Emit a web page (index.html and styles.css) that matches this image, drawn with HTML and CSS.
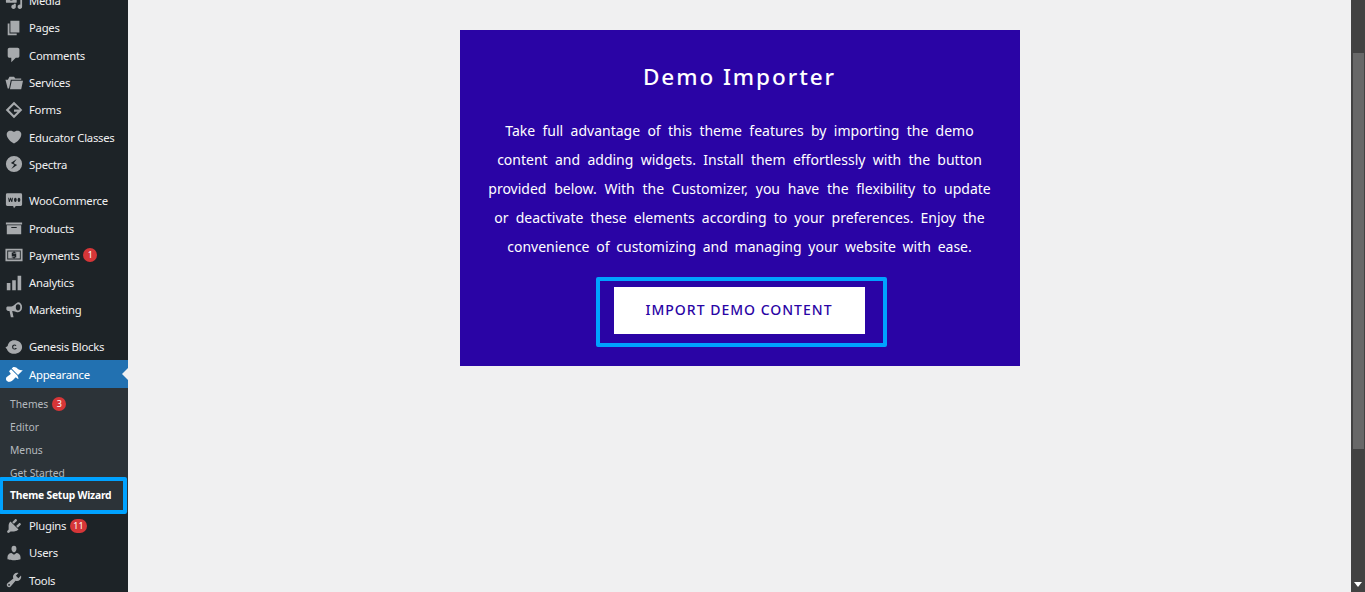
FILE: index.html
```html
<!DOCTYPE html>
<html lang="en">
<head>
    <meta charset="UTF-8">
    <meta name="viewport" content="width=device-width, initial-scale=1.0">
    <title>Demo Importer</title>
    <link rel="stylesheet" href="styles.css">
</head>
<body>
    <div class="page">
        <!-- Admin menu -->
        <nav class="sidebar">
            <ul class="menu">
                <li class="item"><svg class="icon" viewBox="0 0 20 20"><path d="M13 11V4c0-.55-.45-1-1-1h-1.67L9 1H5L3.67 3H2c-.55 0-1 .45-1 1v7c0 .55.45 1 1 1h10c.55 0 1-.45 1-1zM7 4.500c1.380 0 2.500 1.120 2.500 2.500S8.380 9.500 7 9.500 4.500 8.380 4.500 7 5.620 4.500 7 4.500zM14 6h5v10.500c0 1.380-1.120 2.500-2.500 2.500S14 17.880 14 16.500s1.120-2.500 2.500-2.500c.17 0 .34.02.5.05V9h-3V6zm-4 8.050V13h2v3.500c0 1.380-1.120 2.500-2.500 2.500S7 17.880 7 16.500 8.120 14 9.500 14c.17 0 .34.02.5.05z"/></svg>Media</li>
                <li class="item"><svg class="icon" viewBox="0 0 20 20"><path d="M6 15V2h10v13H6zm-1 1h8v2H3V5h2v11z"/></svg>Pages</li>
                <li class="item"><svg class="icon" viewBox="0 0 20 20"><path d="M5 2h9q.82 0 1.410.59T16 4v7q0 .82-.59 1.410T14 13h-2l-5 5v-5H5q-.82 0-1.410-.59T3 11V4q0-.82.59-1.410T5 2z"/></svg>Comments</li>
                <li class="item"><svg class="icon" viewBox="0 0 20 20"><path d="M5 3h5l1.500 2H18v1.500H6.500L4.500 16H3L.5 6.500h2.700zM7.500 7.500H20l-2 9.500H5.500z"/></svg>Services</li>
                <li class="item"><svg class="icon" viewBox="0 0 20 20"><path d="M10 .8L19.200 10 10 19.200 .8 10zM10 4.200L4.200 10l5.800 5.800 3.900-3.900H10V9.500h6.500z" fill-rule="evenodd"/></svg>Forms</li>
                <li class="item"><svg class="icon" viewBox="0 0 20 20"><path d="M10 17.120c3.330-1.400 5.740-3.790 7.040-6.210 1.280-2.410 1.460-4.810.32-6.250-1.030-1.290-2.370-1.780-3.730-1.740s-2.680.63-3.630 1.460c-.95-.83-2.270-1.420-3.630-1.460s-2.700.45-3.730 1.740c-1.140 1.440-.96 3.840.34 6.250 1.280 2.420 3.690 4.810 7.020 6.210z"/></svg>Educator Classes</li>
                <li class="item"><svg class="icon" viewBox="0 0 20 20"><path fill-rule="evenodd" d="M10 1a9 9 0 1 1 0 18 9 9 0 0 1 0-18zM13 4.500L6.500 9l3.800 1.800L7 15.500 13.500 11 9.700 9.200z"/></svg>Spectra</li>
            </ul>
            <ul class="menu">
                <li class="item"><svg class="icon" viewBox="0 0 20 20"><path fill-rule="evenodd" d="M2.500 1.500h15a1.500 1.500 0 0 1 1.500 1.500v11a1.500 1.500 0 0 1-1.500 1.500h-5.500L10 18l-1-2.500H2.500A1.500 1.500 0 0 1 1 14V3a1.500 1.500 0 0 1 1.500-1.500zM3.500 6.500l.8 4.500h1l.9-2.500.9 2.500h1l.8-4.500H8l-.4 2.500-.9-2.500h-1l-.9 2.500-.4-2.500zM11.500 6.500a1.500 2.250 0 1 0 .01 0zM15.500 6.500a1.500 2.250 0 1 0 .01 0z"/></svg>WooCommerce</li>
                <li class="item"><svg class="icon" viewBox="0 0 20 20"><path d="M19 4v2H1V4h18zM2 7h16v10H2V7zm11 3V9H7v1h6z"/></svg>Products</li>
                <li class="item"><svg class="icon" viewBox="0 0 20 20"><path fill-rule="evenodd" d="M.5 3h19v14H.5zM2.500 5v10h15V5zM3.500 6h13v8h-13zM12.500 7.200H11V6.500H9.200v.7H7.500V11h3.200v.7H7.500v1.200h1.700v.6H11v-.6h1.500V9H9.300v-.7h3.200z"/></svg>Payments<span class="badge">1</span></li>
                <li class="item"><svg class="icon" viewBox="0 0 20 20"><path d="M18 18V2h-4v16h4zm-6 0V7H8v11h4zm-6 0v-8H2v8h4z"/></svg>Analytics</li>
                <li class="item"><svg class="icon" viewBox="0 0 20 20"><path fill-rule="evenodd" d="M14.500 1.500a4.500 5.500 0 1 1 0 11c-1 0-4-1.500-6.500-1.500L9.500 18h-3L5 11H3.500C2.500 11 1.500 10 1.500 9V7.500c0-1 1-1.500 2-1.500H7c3 0 6-4.500 7.500-4.500zM14.500 3.500a2.500 3.500 0 1 0 0 7 2.500 3.500 0 1 0 0-7z"/></svg>Marketing</li>
            </ul>
            <ul class="menu menu-shifted">
                <li class="item"><svg class="icon" viewBox="0 0 20 20"><path fill-rule="evenodd" d="M10 2.500c4.800 0 9 3 9 7.500s-4.200 7.500-9 7.500c-4 0-7-2.300-7.800-5L.5 10.500 3 9C3.500 5 6.500 2.500 10 2.500zM10.500 7.200A2.800 2.800 0 1 0 13.200 11H10.500v1h1.300a1.500 1.500 0 1 1-1.300-3.800c.5 0 1 .2 1.300.6l.9-.6c-.5-.6-1.300-1-2.200-1z"/></svg>Genesis Blocks</li>
                <li class="item current"><svg class="icon" viewBox="0 0 20 20"><path d="M14.480 11.060L7.410 3.990l1.500-1.500c.5-.56 2.300-.47 3.510.32 1.210.8 1.430 1.280 2.910 2.100 1.180.64 2.450 1.260 4.450.85zm-.71.71L6.700 4.700 4.930 6.470c-.39.39-.39 1.020 0 1.410l1.060 1.060c.39.39.39 1.030 0 1.420-.6.6-1.430 1.110-2.210 1.690-.35.26-.7.53-1.010.84C1.430 13.230.18 15.830 2.100 17.900c.91.91 2.260.96 3.220.75 1.470-.31 3.140-1.600 4.160-2.570.58-.55 1.140-1.350 1.700-2.030.39-.39 1.020-.39 1.410 0l1.070 1.060c.39.39 1.020.39 1.410 0z"/></svg>Appearance</li>
                <li class="submenu">
                    <a class="sub-link">Themes<span class="badge">3</span></a>
                    <a class="sub-link">Editor</a>
                    <a class="sub-link">Menus</a>
                    <a class="sub-link">Get Started</a>
                    <a class="sub-link wizard">Theme Setup Wizard</a>
                </li>
                <li class="item"><svg class="icon" viewBox="0 0 20 20"><path d="M13.110 4.360L9.870 7.600 8 5.730l3.240-3.240c.35-.34 1.050-.2 1.560.32.52.51.66 1.210.31 1.550zm-8 1.770l.91-1.120 9.010 9.010-1.190.84c-.71.71-2.630 1.160-3.820 1.160H6.140L4.900 17.260c-.59.59-1.540.59-2.120 0-.59-.58-.59-1.530 0-2.120l1.240-1.240v-3.880c0-1.130.4-3.190 1.090-3.890zm7.260 3.970l3.240-3.240c.34-.35 1.040-.2 1.550.31.52.51.66 1.210.31 1.550l-3.240 3.250z"/></svg>Plugins<span class="badge">11</span></li>
                <li class="item"><svg class="icon" viewBox="0 0 20 20"><path d="M10 9.250c-2.270 0-2.730-3.440-2.730-3.440C7 4.020 7.820 2 9.970 2c2.160 0 2.980 2.020 2.710 3.810 0 0-.41 3.440-2.680 3.440zm0 2.570L12.720 10c2.390 0 4.520 2.330 4.520 4.530v2.490s-3.650 1.130-7.240 1.130c-3.650 0-7.240-1.130-7.240-1.130v-2.490c0-2.250 1.940-4.480 4.470-4.480z"/></svg>Users</li>
                <li class="item"><svg class="icon" viewBox="0 0 20 20"><path d="M16.680 9.770c-1.340 1.340-3.300 1.670-4.950.99l-5.410 6.520c-.99.99-2.590.99-3.580 0s-.99-2.590 0-3.570l6.520-5.420c-.68-1.650-.35-3.610.99-4.950 1.280-1.280 3.120-1.620 4.720-1.060l-2.890 2.890 2.820 2.820 2.860-2.870c.53 1.580.18 3.390-1.080 4.650zM3.810 16.210c.4.39 1.040.39 1.430 0 .4-.4.4-1.040 0-1.430-.39-.4-1.030-.4-1.430 0-.39.39-.39 1.030 0 1.430z"/></svg>Tools</li>
            </ul>
        </nav>

        <main class="content">
            <section class="importer">
                <h2>Demo Importer</h2>
                <p>
                    <span class="line spread-1">Take full advantage of this theme features by importing the demo</span>
                    <span class="line spread-2">content and adding widgets. Install them effortlessly with the button</span>
                    <span class="line spread-3">provided below. With the Customizer, you have the flexibility to update</span>
                    <span class="line spread-4">or deactivate these elements according to your preferences. Enjoy the</span>
                    <span class="line spread-5">convenience of customizing and managing your website with ease.</span>
                </p>
                <div class="import-outline">
                    <a class="import-button">IMPORT DEMO CONTENT</a>
                </div>
            </section>
        </main>

        <!-- Browser scrollbar -->
        <div class="scrollbar">
            <div class="scroll-thumb"></div>
            <div class="scroll-arrow"></div>
        </div>
    </div>
</body>
</html>
```

FILE: styles.css
```css
body {
    margin: 0;
    font-family: "Noto Sans", sans-serif;
    background-color: #f0f0f1;
    overflow: hidden;
}
.page {
    display: flex;
    height: 592px;
}
.sidebar {
    width: 128px;
    flex-shrink: 0;
    background-color: #1d2327;
    overflow: hidden;
}
.menu {
    list-style: none;
    margin: 0 0 9px 0;
    padding: 0;
}
.sidebar .menu:first-child {
    margin-top: -13px;
}
.menu-shifted {
    margin-top: 9.6px;
}
.item {
    display: flex;
    align-items: center;
    height: 27.3px;
    padding-left: 5px;
    font-size: 11.3px;
    letter-spacing: -0.25px;
    color: #f0f0f1;
    white-space: nowrap;
}
.icon {
    width: 18px;
    height: 18px;
    margin-right: 6px;
    fill: #a7aaad;
    flex-shrink: 0;
}
.current {
    position: relative;
    background-color: #2271b1;
    color: #fff;
}
.current .icon {
    fill: #fff;
}
/* little arrow pointing at the content */
.current::after {
    content: "";
    position: absolute;
    right: 0;
    top: 8px;
    border: 6px solid transparent;
    border-left-width: 0;
    border-right-color: #f0f0f1;
}
.badge {
    display: inline-block;
    min-width: 14px;
    height: 14px;
    line-height: 14px;
    margin-left: 4px;
    padding: 0 3px;
    box-sizing: border-box;
    border-radius: 9px;
    background-color: #d63638;
    color: #fff;
    font-size: 9px;
    letter-spacing: 0;
    text-align: center;
}
.submenu {
    display: block;
    height: 119.2px;
    padding-top: 5px;
    background-color: #2c3338;
}
.sub-link {
    display: flex;
    align-items: center;
    height: 22.8px;
    padding-left: 10px;
    font-size: 10.3px;
    color: #b4b9be;
    white-space: nowrap;
}
.wizard {
    position: relative;
    height: 29px;
    margin: -7.4px 1px 0 -1px;
    padding-left: 7px;
    border: 4px solid #00a2ff;
    border-radius: 2px;
    background-color: #2c3338;
    color: #fff;
    font-weight: 700;
    letter-spacing: -0.2px;
}
.content {
    flex: 1;
    padding-top: 30px;
}
.importer {
    width: 560px;
    height: 336px;
    margin: 0 auto;
    padding-top: 32px;
    box-sizing: border-box;
    background-color: #2a04a5;
    color: #fff;
    text-align: center;
}
.importer h2 {
    margin: 0;
    font-size: 22.5px;
    line-height: 30px;
    font-weight: 500;
    letter-spacing: 1.95px;
}
.importer p {
    margin: 24px 0 0 0;
    font-size: 14px;
    line-height: 29px;
    white-space: nowrap;
}
.line {
    display: block;
}
.spread-1 { word-spacing: 3.7px; }
.spread-2 { word-spacing: 3.7px; }
.spread-3 { word-spacing: 4.1px; }
.spread-4 { word-spacing: 3.5px; }
.spread-5 { word-spacing: 3.1px; }
.import-outline {
    width: 291px;
    height: 70px;
    margin: 16px 0 0 136px;
    box-sizing: border-box;
    padding: 6px 18px 9px 14px;
    border: 4px solid #00a2ff;
    border-radius: 2px;
}
.import-button {
    display: block;
    height: 47px;
    line-height: 46px;
    background-color: #fff;
    color: #2a04a5;
    font-size: 14px;
    font-weight: 500;
    letter-spacing: 1px;
}
.scrollbar {
    position: relative;
    width: 14px;
    flex-shrink: 0;
    background-color: #424242;
}
.scroll-thumb {
    margin: 53px 1px 0 2px;
    height: 396px;
    background-color: #686868;
}
.scroll-arrow {
    position: absolute;
    left: 3px;
    bottom: 5px;
    border: 4px solid transparent;
    border-bottom-width: 0;
    border-top: 5px solid #fff;
}
```
